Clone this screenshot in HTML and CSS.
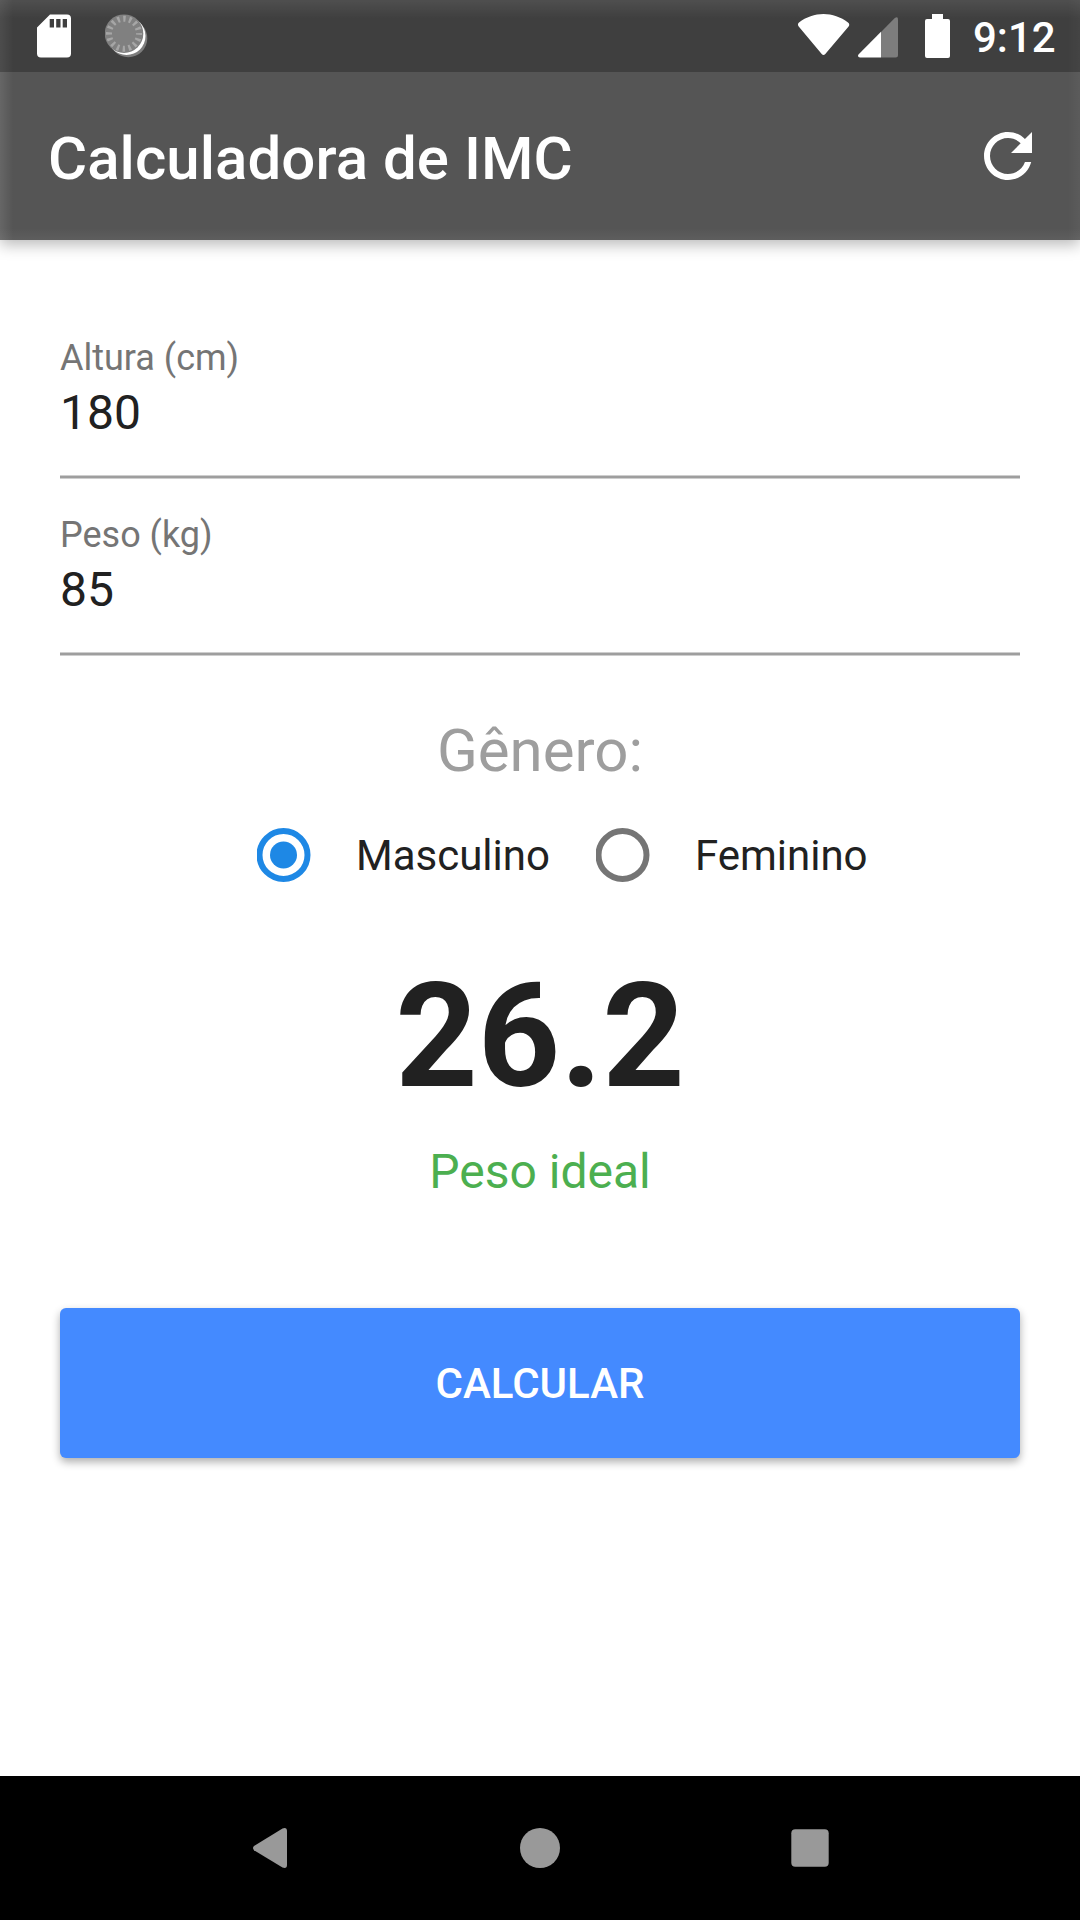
FILE: index.html
```html
<!DOCTYPE html>
<html lang="pt-BR">
<head>
<meta charset="utf-8">
<title>Calculadora de IMC</title>
<link rel="stylesheet" href="styles.css">
</head>
<body>
<div class="screen">
  <header class="top">
    <div class="status-bar">
      <svg class="icon-sd" width="34" height="44" viewBox="0 0 34 44"><path fill="#fff" fill-rule="evenodd" d="M13 .5H30a4 4 0 0 1 4 4V39.500a4 4 0 0 1-4 4H4a4 4 0 0 1-4-4V13.500zM12.700 5v8.500h4.300V5zM19.200 5v8.500h4.300V5zM25.700 5v8.500h4.300V5z"/></svg>
      <svg class="icon-sync" width="43" height="44" viewBox="0 0 43 44">
        <circle cx="23.300" cy="24.200" r="19" fill="#7d7d7d"/>
        <circle cx="21.500" cy="22" r="19" fill="#fff"/>
        <circle cx="19" cy="19.700" r="19.300" fill="#808080"/>
        <circle cx="19" cy="19.700" r="15" fill="none" stroke="#a6a6a6" stroke-width="6" stroke-dasharray="2.400 3.490" stroke-dashoffset="1.200"/>
      </svg>
      <span class="spacer"></span>
      <svg class="icon-wifi" width="52" height="42" viewBox="0 0 52 42"><path fill="#fff" d="M1 8.500C8 3 17 0 25.500 0S43 3 50 8.500q2.200 1.800.6 3.900L27.300 40q-1.800 2.200-3.600 0L.7 12.400Q-1 10.300 1 8.500z"/></svg>
      <svg class="icon-signal" width="40" height="41" viewBox="0 0 40 41"><path fill="#7d7d7d" d="M23 15 36.800 1Q40-1 40 2.500V38q0 2.500-2.500 2.500H23z"/><path fill="#fff" d="M23 14.700V40.500H2q-3.200-.5-1.300-3.300z"/></svg>
      <svg class="icon-battery" width="25" height="44" viewBox="0 0 25 44"><path fill="#fff" d="M7 0H18V5h5q2 0 2 2V42q0 2-2 2H2q-2 0-2-2V7q0-2 2-2H7z"/></svg>
      <span class="clock">9:12</span>
    </div>
    <div class="app-bar">
      <h1 class="title">Calculadora de IMC</h1>
      <svg class="icon-refresh" width="72" height="72" viewBox="0 0 24 24"><path fill="#fff" d="M17.650 6.350C16.200 4.900 14.210 4 12 4c-4.420 0-7.990 3.580-7.990 8s3.570 8 7.990 8c3.730 0 6.840-2.550 7.730-6h-2.080c-.82 2.330-3.040 4-5.650 4-3.310 0-6-2.690-6-6s2.690-6 6-6c1.660 0 3.140.69 4.220 1.780L13 11h7V4l-2.350 2.350z"/></svg>
    </div>
  </header>
  <main class="content">
    <div class="field">
      <div class="label">Altura (cm)</div>
      <div class="value">180</div>
    </div>
    <div class="field">
      <div class="label">Peso (kg)</div>
      <div class="value">85</div>
    </div>
    <h2 class="gender">Gênero:</h2>
    <div class="options">
      <div class="option">
        <svg width="54" height="54" viewBox="0 0 54 54"><circle cx="26.500" cy="27" r="24" fill="none" stroke="#1e88e5" stroke-width="6"/><circle cx="26.500" cy="27" r="13.500" fill="#1e88e5"/></svg>
        <span>Masculino</span>
      </div>
      <div class="option">
        <svg width="54" height="54" viewBox="0 0 54 54"><circle cx="26.500" cy="27" r="24" fill="none" stroke="#757575" stroke-width="6"/></svg>
        <span>Feminino</span>
      </div>
    </div>
    <div class="result">26.2</div>
    <div class="verdict">Peso ideal</div>
    <button class="calculate">CALCULAR</button>
  </main>
  <nav class="nav-bar">
    <div class="nav-key"><svg width="40" height="42" viewBox="0 0 40 42"><path fill="#999" d="M4 19 32.500 1.500Q37 0 37 4V38q0 4-4.500 2.500L4 23.200Q2 21.100 4 19z"/></svg></div>
    <div class="nav-key"><svg width="40" height="40" viewBox="0 0 40 40"><circle cx="20" cy="20" r="20" fill="#999"/></svg></div>
    <div class="nav-key"><svg width="38" height="38" viewBox="0 0 38 38"><rect x=".3" y=".3" width="37.400" height="37.400" rx="4" fill="#999"/></svg></div>
  </nav>
</div>
</body>
</html>
```
FILE: styles.css
```css
* { box-sizing: border-box; }

body {
  margin: 0;
  background: #fff;
  font-family: Roboto, sans-serif;
  color: #212121;
}

.screen {
  width: 1080px;
  height: 1920px;
  display: flex;
  flex-direction: column;
  background: #fff;
}

.top {
  height: 240px;
  background:
    linear-gradient(to right, rgba(255, 255, 255, .1), transparent 13px),
    linear-gradient(to left, rgba(255, 255, 255, .04), transparent 12px),
    linear-gradient(to bottom, rgba(255, 255, 255, .12), transparent 18px),
    linear-gradient(to top, rgba(255, 255, 255, .05), transparent 12px),
    #555;
  box-shadow: 0 5px 14px rgba(0, 0, 0, .27);
}

.status-bar {
  height: 72px;
  padding: 0 22px 0 37px;
  display: flex;
  align-items: flex-start;
  background: rgba(0, 0, 0, .25);
}

.spacer { flex: 1; }
.icon-sd { margin-top: 14px; }
.icon-sync { margin: 14px 0 0 34px; }
.icon-wifi { margin-top: 14px; }
.icon-signal { margin: 17px 0 0 8px; }
.icon-battery { margin: 14px 0 0 27px; }

.clock {
  width: 85px;
  margin: 13px 0 0 23px;
  font-size: 42px;
  line-height: 49px;
  font-weight: 500;
  color: #fff;
}

.app-bar {
  height: 168px;
  padding: 48px 36px 0 48px;
  display: flex;
  justify-content: space-between;
  align-items: flex-start;
}

.title {
  margin: 3px 0 0;
  font-size: 60px;
  line-height: 71px;
  font-weight: 500;
  letter-spacing: .05px;
  color: #fff;
}

.content {
  flex: 1;
  padding: 97px 60px 0;
  display: flex;
  flex-direction: column;
}

.field {
  height: 142px;
  margin-bottom: 35px;
  background: linear-gradient(#cecece 1px, #9e9e9e 1px, #9e9e9e 3px, #cecece 3px) bottom / 100% 4px no-repeat;
}

.label {
  margin-bottom: 5px;
  font-size: 36px;
  line-height: 42px;
  color: #757575;
}

.value {
  font-size: 48px;
  line-height: 57px;
}

.gender {
  margin: 24px 0 42px;
  font-size: 60px;
  line-height: 71px;
  font-weight: 400;
  text-align: center;
  color: #9e9e9e;
}

.options {
  padding-left: 197px;
  display: flex;
  gap: 46px;
}

.option {
  display: flex;
  align-items: center;
  gap: 45px;
  font-size: 42px;
  line-height: 49px;
}

.result {
  margin-top: 70px;
  font-size: 144px;
  line-height: 169px;
  font-weight: 700;
  text-align: center;
}

.verdict {
  margin-top: 22px;
  font-size: 48px;
  line-height: 57px;
  text-align: center;
  color: #4caf50;
}

.calculate {
  height: 150px;
  margin-top: 108px;
  padding: 0;
  border: 0;
  border-radius: 6px;
  background: #448aff;
  box-shadow: 0 4px 8px rgba(0, 0, 0, .32);
  font: 500 42px/49px Roboto, sans-serif;
  color: #fff;
}

.nav-bar {
  height: 144px;
  padding: 0 135px;
  display: flex;
  align-items: center;
  background: #000;
}

.nav-key {
  flex: 1;
  display: flex;
  justify-content: center;
}
```
